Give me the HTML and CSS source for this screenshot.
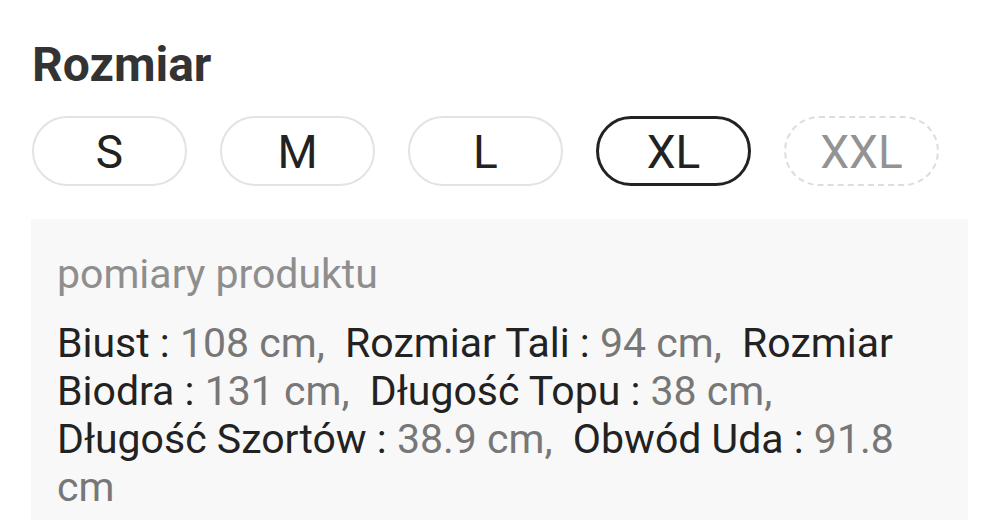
FILE: index.html
```html
<!DOCTYPE html>
<html lang="pl">
<head>
<meta charset="utf-8">
<link rel="stylesheet" href="styles.css">
</head>
<body>
<div class="wrap">
  <h1 class="title">Rozmiar</h1>
  <div class="sizes">
    <button class="size">S</button>
    <button class="size">M</button>
    <button class="size">L</button>
    <button class="size selected">XL</button>
    <button class="size disabled">XXL</button>
  </div>
  <div class="measures">
    <div class="measures-title">pomiary produktu</div>
    <p class="measures-text"><span class="k">Biust :</span> <span class="v">108 cm,</span>&nbsp; <span class="k">Rozmiar Tali :</span> <span class="v">94 cm,</span>&nbsp; <span class="k">Rozmiar Biodra :</span> <span class="v">131 cm,</span>&nbsp; <span class="k">Długość Topu :</span> <span class="v">38 cm,</span>&nbsp; <span class="k">Długość Szortów :</span> <span class="v">38.9 cm,</span>&nbsp; <span class="k">Obwód Uda :</span> <span class="v">91.8 cm</span></p>
  </div>
</div>
</body>
</html>
```

FILE: styles.css
```css
html, body {
  margin: 0;
  padding: 0;
  background: #ffffff;
}
body {
  font-family: Roboto, "Noto Sans", Arial, sans-serif;
  overflow: hidden;
  height: 520px;
}
.wrap {
  padding: 37px 32px 0 31px;
}
.title {
  margin: 0 0 0 1px;
  font-size: 48px;
  line-height: 56px;
  font-weight: 700;
  color: #333333;
}
.sizes {
  display: flex;
  gap: 33px;
  margin-top: 23px;
  padding-left: 1px;
}
.size {
  box-sizing: border-box;
  width: 155px;
  height: 70px;
  border: 2px solid #e3e3e3;
  border-radius: 35px;
  background: #ffffff;
  font-family: Roboto, "Noto Sans", Arial, sans-serif;
  font-size: 46px;
  color: #222222;
  padding: 2px 0 0 0;
  display: flex;
  align-items: center;
  justify-content: center;
}
.size.selected {
  border: 3px solid #222222;
}
.size.disabled {
  border: 2px dashed #dddddd;
  color: #939393;
}
.measures {
  margin-top: 33px;
  background: #f8f8f8;
  padding: 31px 40px 9px 26px;
}
.measures-title {
  font-size: 41px;
  line-height: 48px;
  color: #8e8e8e;
}
.measures-text {
  margin: 21px 0 0 0;
  font-size: 41px;
  line-height: 48px;
}
.k {
  color: #222222;
}
.v {
  color: #777777;
}
```
